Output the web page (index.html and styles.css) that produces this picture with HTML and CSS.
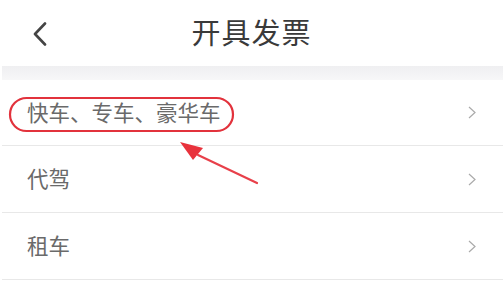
FILE: index.html
```html
<!DOCTYPE html>
<html lang="zh">
<head>
<meta charset="utf-8">
<title>开具发票</title>
<link rel="stylesheet" href="styles.css">
</head>
<body>
<div class="page">
  <header class="header">
    <span class="back">
      <svg width="16" height="24" viewBox="0 0 16 24"><path d="M13 1.5 L3 12 L13 22.5" fill="none" stroke="#444" stroke-width="2.6" stroke-linecap="round" stroke-linejoin="round"/></svg>
    </span>
    <h1 class="title">开具发票</h1>
  </header>
  <div class="band"></div>
  <ul class="list">
    <li class="row"><span class="label">快车、专车、豪华车</span><svg class="chev" width="8" height="13" viewBox="0 0 8 13"><path d="M1 1 L7 6.5 L1 12" fill="none" stroke="#aaa" stroke-width="1.2"/></svg></li>
    <li class="row"><span class="label">代驾</span><svg class="chev" width="8" height="13" viewBox="0 0 8 13"><path d="M1 1 L7 6.5 L1 12" fill="none" stroke="#aaa" stroke-width="1.2"/></svg></li>
    <li class="row"><span class="label">租车</span><svg class="chev" width="8" height="13" viewBox="0 0 8 13"><path d="M1 1 L7 6.5 L1 12" fill="none" stroke="#aaa" stroke-width="1.2"/></svg></li>
  </ul>
  <svg class="annot" width="503" height="296" viewBox="0 0 503 296">
    <rect x="10" y="98" width="223" height="33" rx="16.5" ry="16.5" fill="none" stroke="#e2323c" stroke-width="2.2"/>
    <line x1="257" y1="183" x2="198" y2="155" stroke="#e8404a" stroke-width="2.2" stroke-linecap="round"/>
    <polygon points="180,142 203,148 193,160" fill="#e8323c"/>
  </svg>
</div>
</body>
</html>
```

FILE: styles.css
```css
* { box-sizing: border-box; }
html, body { margin: 0; padding: 0; background: #fff; }
body {
  font-family: "Noto Sans CJK SC", "Noto Sans", sans-serif;
  width: 503px;
  height: 296px;
  overflow: hidden;
}
.page { position: relative; width: 503px; height: 296px; }
.header {
  height: 66px;
  display: flex;
  align-items: center;
  justify-content: center;
  position: relative;
}
.back {
  position: absolute;
  left: 32px;
  top: 22px;
  display: flex;
}
.title {
  margin: 0 0 4px 0;
  font-size: 29px;
  font-weight: 400;
  color: #3a3a3a;
  letter-spacing: 1px;
}
.band {
  height: 14px;
  margin-left: 2px;
  background: linear-gradient(#efeff1, #f7f7f8);
}
.list { list-style: none; margin: 0; padding: 0; }
.row {
  height: 67px;
  margin-left: 2px;
  border-bottom: 1px solid #e8e8e8;
  display: flex;
  align-items: center;
  justify-content: space-between;
  padding: 0 27px 0 25px;
}
.row:first-child { height: 66px; }
.label {
  font-size: 21.5px;
  color: #6a6a6a;
  line-height: 1;
  margin-top: -2px;
}
.chev { display: block; }
.annot { position: absolute; left: 0; top: 0; pointer-events: none; }
```
